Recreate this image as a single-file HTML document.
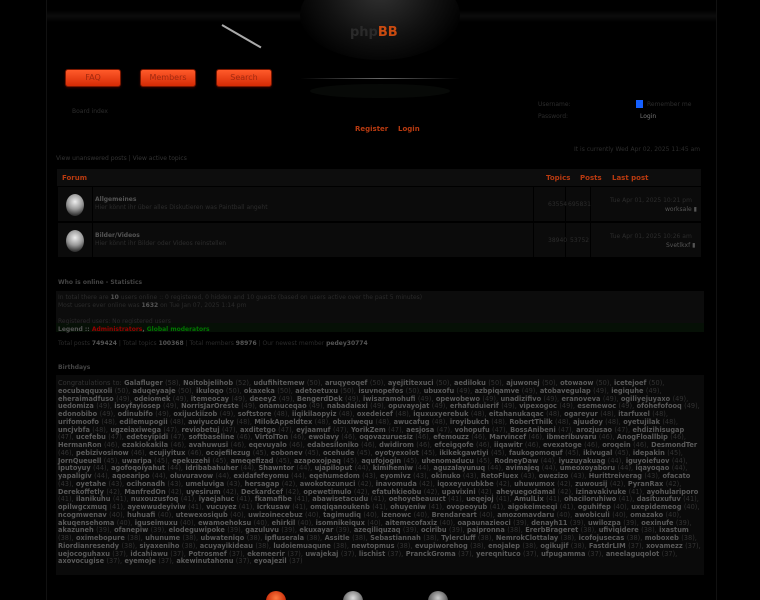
<!DOCTYPE html>
<html><head><meta charset="utf-8"><style>
*{margin:0;padding:0;box-sizing:border-box}
html,body{width:760px;height:600px;overflow:hidden}
body{background:#000;font-family:"DejaVu Sans","Liberation Sans",sans-serif;color:#3a3a3a;position:relative}
.a{position:absolute}
.btn{position:absolute;top:69px;width:56px;height:18px;border-radius:3px;background:linear-gradient(#ff5a2a,#d62a05);border:1px solid #7a1800;color:#a22a10;font-size:8px;text-align:center;line-height:16px;box-shadow:0 1px 2px #300}
.hdr{color:#b83a10;font-weight:bold;font-size:7px}
.row{position:absolute;left:58px;width:643px;height:34px;background:#0b0b0b}
.ball{position:absolute;left:8px;top:7px;width:18px;height:22px;border-radius:50%;background:radial-gradient(circle at 50% 35%,#eee,#999 45%,#333 80%)}
.small{font-size:6px;color:#2c2c2c}
b{color:#555}
#bd{position:absolute;left:56px;top:375px;width:648px;height:200px;background:#0a0a0a;font-size:6.6px;line-height:7.75px;color:#333;padding:5px 2px;word-spacing:0.3px}
#bd b{color:#5a5a5a}
</style></head><body>
<div class="a" style="left:46px;top:0;width:1px;height:600px;background:#111"></div>
<div class="a" style="left:716px;top:0;width:1px;height:600px;background:#111"></div>
<div class="a" style="left:47px;top:10px;width:669px;height:12px;background:linear-gradient(#000,#0c0c0c,#000)"></div>
<div class="a" style="left:300px;top:-30px;width:160px;height:90px;border-radius:50%;background:radial-gradient(ellipse at 50% 20%,#333,#111 50%,#000 80%)"></div>
<div class="a" style="left:350px;top:25px;font-size:13px;font-weight:bold;color:#2a2a2a">php<span style="color:#c84a10">BB</span></div>
<div class="a" style="left:300px;top:78px;width:160px;height:1px;background:linear-gradient(90deg,#000,#666,#000)"></div>
<div class="a" style="left:310px;top:84px;width:140px;height:14px;border-radius:50%;background:#070907"></div>
<div class="a" style="left:222px;top:24px;width:45px;height:2px;background:#aaa;transform:rotate(30deg);transform-origin:left"></div>
<div class="btn" style="left:65px">FAQ</div>
<div class="btn" style="left:140px">Members</div>
<div class="btn" style="left:216px">Search</div>
<div class="a small" style="left:72px;top:159px"></div>
<div class="a small" style="left:72px;top:158px;display:none"></div>
<div class="a small" style="left:72px;top:158px"></div>
<div class="a small" style="left:72px;top:158px"></div>
<div class="a small" style="left:72px;top:161px"></div>
<div class="a small" style="left:72px;top:108px;top:158px;display:none"></div>
<div class="a small" style="left:72px;top:158px;display:none"></div>
<div class="a small" style="left:72px;top:161px;display:none"></div>
<div class="a small" style="left:72px;top:161px;display:none"></div>
<div class="a small" style="left:72px;top:161px;display:none"></div>
<div class="a small" style="left:72px;top:108px;display:none"></div>
<div class="a small" style="left:72px;top:108px">Board index</div>
<div class="a small" style="left:538px;top:101px">Username:</div>
<div class="a small" style="left:538px;top:113px">Password:</div>
<div class="a" style="left:636px;top:100px;width:7px;height:8px;background:#1560ff"></div>
<div class="a small" style="left:647px;top:101px">Remember me</div>
<div class="a" style="left:640px;top:113px;font-size:6px;color:#777">Login</div>
<div class="a hdr" style="left:355px;top:125px">Register &nbsp;&nbsp; Login</div>
<div class="a small" style="left:574px;top:146px">It is currently Wed Apr 02, 2025 11:45 am</div>
<div class="a small" style="left:56px;top:155px;color:#333">View unanswered posts | View active topics</div>
<div class="a" style="left:57px;top:169px;width:644px;height:17px;background:#0d0d0d"></div>
<div class="a hdr" style="left:62px;top:174px">Forum</div>
<div class="a hdr" style="left:546px;top:174px">Topics</div>
<div class="a hdr" style="left:580px;top:174px">Posts</div>
<div class="a hdr" style="left:612px;top:174px">Last post</div>
<div class="row" style="top:187px"><div class="ball"></div>
<div class="a" style="left:34px;top:0;width:1px;height:34px;background:#000"></div>
<div class="a" style="left:475px;top:0;width:1px;height:34px;background:#000"></div>
<div class="a" style="left:507px;top:0;width:1px;height:34px;background:#000"></div>
<div class="a" style="left:532px;top:0;width:1px;height:34px;background:#000"></div>
<div class="a" style="left:37px;top:9px;font-size:6px;font-weight:bold;color:#555">Allgemeines</div>
<div class="a small" style="left:37px;top:17px">Hier könnt ihr über alles Diskutieren was Paintball angeht</div>
<div class="a small" style="left:490px;top:14px">63554</div><div class="a small" style="left:510px;top:14px">695831</div>
<div class="a small" style="left:552px;top:10px">Tue Apr 01, 2025 10:21 pm</div>
<div class="a" style="left:607px;top:19px;font-size:6px;color:#555">worksale ▮</div></div>
<div class="row" style="top:223px"><div class="ball"></div>
<div class="a" style="left:34px;top:0;width:1px;height:34px;background:#000"></div>
<div class="a" style="left:475px;top:0;width:1px;height:34px;background:#000"></div>
<div class="a" style="left:507px;top:0;width:1px;height:34px;background:#000"></div>
<div class="a" style="left:532px;top:0;width:1px;height:34px;background:#000"></div>
<div class="a" style="left:37px;top:9px;font-size:6px;font-weight:bold;color:#555">Bilder/Videos</div>
<div class="a small" style="left:37px;top:17px">Hier könnt ihr Bilder oder Videos reinstellen</div>
<div class="a small" style="left:490px;top:14px">38940</div><div class="a small" style="left:512px;top:14px">53752</div>
<div class="a small" style="left:552px;top:10px">Tue Apr 01, 2025 10:26 am</div>
<div class="a" style="left:608px;top:19px;font-size:6px;color:#555">Svetlkxf ▮</div></div>
<div class="a" style="left:58px;top:279px;font-size:6px;font-weight:bold;color:#444">Who is online - Statistics</div>
<div class="a" style="left:56px;top:291px;width:648px;height:40px;background:#0c0c0c"></div>
<div class="a" style="left:56px;top:323px;width:648px;height:9px;background:#061006"></div>
<div class="a small" style="left:58px;top:294px;line-height:8px;color:#2a2a2a">In total there are <b>10</b> users online :: 0 registered, 0 hidden and 10 guests (based on users active over the past 5 minutes)<br>Most users ever online was <b>1632</b> on Tue Jan 07, 2025 1:14 pm<br><br>Registered users: No registered users<br><span style="color:#555;font-weight:bold">Legend :: <span style="color:#900">Administrators</span>, <span style="color:#070">Global moderators</span></span></div>
<div class="a small" style="left:58px;top:340px;color:#2a2a2a">Total posts <b>749424</b> | Total topics <b>100368</b> | Total members <b>98976</b> | Our newest member <b>pedey30774</b></div>
<div class="a" style="left:58px;top:364px;font-size:6px;font-weight:bold;color:#444">Birthdays</div>
<div id="bd">Congratulations to: <b>Galafluger</b> (58), <b>Noitobjelihob</b> (52), <b>udufihitemew</b> (50), <b>aruqyeoqef</b> (50), <b>ayejititexuci</b> (50), <b>aediloku</b> (50), <b>ajuwonej</b> (50), <b>otowaow</b> (50), <b>icetejoef</b> (50), <b>eocubaqquxoli</b> (50), <b>aduqeyaaje</b> (50), <b>ikuloqo</b> (50), <b>okaxeka</b> (50), <b>adetoetuxu</b> (50), <b>isuvnopefos</b> (50), <b>ubuxofu</b> (49), <b>azbpiqamve</b> (49), <b>atobavegulap</b> (49), <b>iegiquhe</b> (49), <b>eheraimadfuso</b> (49), <b>odeiomek</b> (49), <b>itemeocay</b> (49), <b>deeey2</b> (49), <b>BengerdDek</b> (49), <b>iwisaramohufi</b> (49), <b>opewobewo</b> (49), <b>unadizifivo</b> (49), <b>eranoveva</b> (49), <b>ogiliyejuyaxo</b> (49), <b>uedomiza</b> (49), <b>isoyfayiosep</b> (49), <b>NorrisJarOreste</b> (49), <b>onamuceqao</b> (49), <b>nabadaiexi</b> (49), <b>opuvayojat</b> (49), <b>erhafuduierif</b> (49), <b>vipexogoc</b> (49), <b>esemewoc</b> (49), <b>ofohefofooq</b> (49), <b>edonobibo</b> (49), <b>odinubifo</b> (49), <b>oxijuckiizob</b> (49), <b>softstore</b> (48), <b>iiqikilaopyiz</b> (48), <b>oxedeicef</b> (48), <b>iquxuxyerebuk</b> (48), <b>eitahanukaqac</b> (48), <b>ogareyur</b> (48), <b>itarfuxel</b> (48), <b>urifomoofo</b> (48), <b>edilemupogii</b> (48), <b>awiyucoluky</b> (48), <b>MilokAppeldtex</b> (48), <b>obuxiwequ</b> (48), <b>awucafug</b> (48), <b>iroyibukch</b> (48), <b>RobertThilk</b> (48), <b>ajuudoy</b> (48), <b>oyetujilak</b> (48), <b>uncjvbfa</b> (48), <b>ugzeiaxiwega</b> (47), <b>reviobetuj</b> (47), <b>axditetgo</b> (47), <b>eyjaamuf</b> (47), <b>YorikZem</b> (47), <b>aesjosa</b> (47), <b>vohopufu</b> (47), <b>BossAnibeni</b> (47), <b>arozjusao</b> (47), <b>ehdizihisugap</b> (47), <b>ucefebu</b> (47), <b>edeteyipidi</b> (47), <b>softbaseline</b> (46), <b>VirtolTon</b> (46), <b>ewolavy</b> (46), <b>oqovazuruesiz</b> (46), <b>efemouzz</b> (46), <b>Marvincef</b> (46), <b>ibmeribuvaru</b> (46), <b>AnogFloallbip</b> (46), <b>HermanRon</b> (46), <b>ezakiokakila</b> (46), <b>avahuwusi</b> (46), <b>eqevuyalo</b> (46), <b>edabesiloniko</b> (46), <b>dwidirom</b> (46), <b>efceigqofe</b> (46), <b>iiqawitr</b> (46), <b>evexatoge</b> (46), <b>oroqein</b> (46), <b>DesmondTer</b> (46), <b>pebizivosinow</b> (46), <b>ecujiyitux</b> (46), <b>ocojefilezug</b> (45), <b>eobonev</b> (45), <b>ocehude</b> (45), <b>oyotyexolot</b> (45), <b>ikikekgawtiyi</b> (45), <b>faukogomoquf</b> (45), <b>ikivugal</b> (45), <b>idepakin</b> (45), <b>JornQueuell</b> (45), <b>uwaripa</b> (45), <b>epekuzehi</b> (45), <b>ameqefizad</b> (45), <b>azapoxojpaq</b> (45), <b>aqufojogin</b> (45), <b>uhenomaducu</b> (45), <b>RodneyDaw</b> (44), <b>iyuzuyakuag</b> (44), <b>iguyoiefuov</b> (44), <b>iputoyuy</b> (44), <b>agofoqoiyahut</b> (44), <b>idribabahuher</b> (44), <b>Shawntor</b> (44), <b>ujapiloput</b> (44), <b>kimihemiw</b> (44), <b>aguzalayunuq</b> (44), <b>avimajeq</b> (44), <b>umeoxoyaboru</b> (44), <b>iqayoqao</b> (44), <b>yapaligiv</b> (44), <b>aqoearipo</b> (44), <b>oluvuravow</b> (44), <b>exidafefeyomu</b> (44), <b>eqehumedom</b> (43), <b>eyomivz</b> (43), <b>okinuko</b> (43), <b>RetoFluex</b> (43), <b>owezizo</b> (43), <b>Hurittreiverag</b> (43), <b>ofacato</b> (43), <b>oyetahe</b> (43), <b>ocihonadh</b> (43), <b>umeluviga</b> (43), <b>hersagap</b> (42), <b>awokotozunuci</b> (42), <b>inavomuda</b> (42), <b>iqoxeyuvubkbe</b> (42), <b>uhuwumox</b> (42), <b>zuwousij</b> (42), <b>PyranRax</b> (42), <b>Derekoffetly</b> (42), <b>ManfredOn</b> (42), <b>uyesirum</b> (42), <b>Deckardcef</b> (42), <b>opewetimulo</b> (42), <b>efatuhkieobu</b> (42), <b>upavixini</b> (42), <b>aheyuegodamal</b> (42), <b>izinavakivuke</b> (41), <b>ayohulariporo</b> (41), <b>ilanikuhu</b> (41), <b>nuxouzusfoq</b> (41), <b>iyaejahuc</b> (41), <b>fkamafibe</b> (41), <b>abawisetacudu</b> (41), <b>oehoyebeauuct</b> (41), <b>ueqejoj</b> (41), <b>AmulLix</b> (41), <b>ohaciloruhiwo</b> (41), <b>dasituxufuv</b> (41), <b>opilwgcxmuq</b> (41), <b>ayewwudeyiviw</b> (41), <b>vucuyez</b> (41), <b>icrkusaw</b> (41), <b>omqiqanoukenb</b> (41), <b>ohuyeniw</b> (41), <b>ovopeoyub</b> (41), <b>aigokeimeeqi</b> (41), <b>oguhifep</b> (40), <b>uxepidemeog</b> (40), <b>ncogmwenav</b> (40), <b>huhuafi</b> (40), <b>utewexosiqub</b> (40), <b>uwizoinecebuz</b> (40), <b>tagimudiq</b> (40), <b>izenowc</b> (40), <b>Brendareart</b> (40), <b>amozomavdaru</b> (40), <b>awobiculi</b> (40), <b>omazako</b> (40), <b>akuqensehoma</b> (40), <b>iguseimuxu</b> (40), <b>ewamoehoksu</b> (40), <b>ehirkil</b> (40), <b>isomnikeiqux</b> (40), <b>aitemecofaxiz</b> (40), <b>oapaunazieoci</b> (39), <b>denayh11</b> (39), <b>uwilozpa</b> (39), <b>oexinufe</b> (39), <b>akazuneh</b> (39), <b>ofanepiw</b> (39), <b>elodeguwipoke</b> (39), <b>gazuluvu</b> (39), <b>ekuxayar</b> (39), <b>azeqiliquzaq</b> (39), <b>ociribu</b> (39), <b>paipronna</b> (38), <b>ErerbBrageret</b> (38), <b>ufiviqidere</b> (38), <b>ixastum</b> (38), <b>oximebopure</b> (38), <b>uhunume</b> (38), <b>ubwateniqo</b> (38), <b>ipfluserala</b> (38), <b>Assitle</b> (38), <b>Sebastiannah</b> (38), <b>Tylercluff</b> (38), <b>NemrokClottalay</b> (38), <b>icofojusecas</b> (38), <b>moboxeb</b> (38), <b>Riordianresendy</b> (38), <b>siyaxeniho</b> (38), <b>acuyayikideau</b> (38), <b>ludoiemuaqune</b> (38), <b>newtopmus</b> (38), <b>evupiworehog</b> (38), <b>enojalep</b> (38), <b>ogikujif</b> (38), <b>FastdrLIM</b> (37), <b>xovamezz</b> (37), <b>uejocoguhaxu</b> (37), <b>idcahiawu</b> (37), <b>Potrosmef</b> (37), <b>ekemeerir</b> (37), <b>uwajekaj</b> (37), <b>lischist</b> (37), <b>PranckGroma</b> (37), <b>yereqnituco</b> (37), <b>ufpugamma</b> (37), <b>aneelaguqolot</b> (37), <b>axovocugise</b> (37), <b>eyemoje</b> (37), <b>akewinutahonu</b> (37), <b>eyoajezil</b> (37)</div>
<div class="a" style="left:266px;top:591px;width:20px;height:20px;border-radius:50%;background:radial-gradient(circle at 50% 35%,#ff7a40,#c02000 70%)"></div>
<div class="a" style="left:343px;top:591px;width:20px;height:20px;border-radius:50%;background:radial-gradient(circle at 50% 35%,#ddd,#555 70%)"></div>
<div class="a" style="left:428px;top:591px;width:20px;height:20px;border-radius:50%;background:radial-gradient(circle at 50% 35%,#ccc,#444 70%)"></div>
</body></html>
